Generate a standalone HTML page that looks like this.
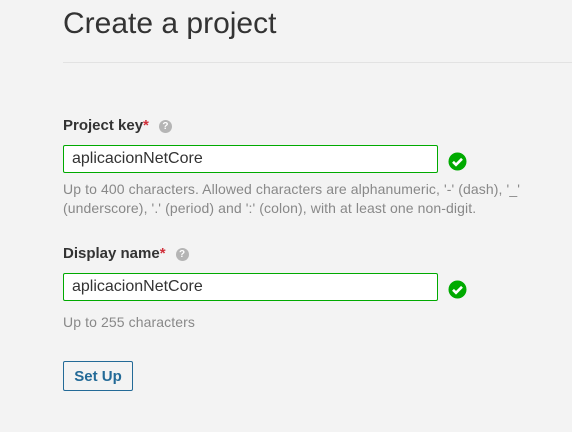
<!DOCTYPE html>
<html><head><style>
body{margin:0;background:#f3f3f3;font-family:"Liberation Sans",Arial,sans-serif;width:572px;height:432px;overflow:hidden;position:relative;color:#333}
.a{position:absolute}
h1{position:absolute;left:63px;top:7px;margin:0;font-size:30px;font-weight:normal;color:#333}
.sep{left:63px;top:62px;width:509px;height:1px;background:#e2e2e2}
.lbl{font-size:15px;font-weight:bold;color:#333}
.lbl i{color:#d02f3a;font-style:normal}
.q{display:inline-block;width:13px;height:13px;border-radius:50%;background:#b5b5b5;color:#fff;font-size:10px;line-height:13px;text-align:center;font-weight:bold;margin-left:10px;vertical-align:1px}
.inp{left:63px;height:26px;border:1px solid #00aa00;border-radius:2px;background:#fff;font-size:16px;line-height:26px;padding-left:8px;box-sizing:content-box;width:365px;color:#333}
.help{font-size:14px;color:#888;line-height:19px;letter-spacing:0.1px}
.btn{left:63px;top:361px;width:68px;height:28px;border:1px solid #236a97;border-radius:2px;color:#236a97;font-weight:bold;font-size:15px;text-align:center;line-height:29px}
</style></head><body>
<h1>Create a project</h1>
<div class="a sep"></div>
<div class="a lbl" style="left:63px;top:117px">Project key<i>*</i><span class="q">?</span></div>
<div class="a inp" style="top:145px">aplicacionNetCore</div>
<svg class="a" style="left:448px;top:152px" width="19" height="19" viewBox="0 0 19 19"><circle cx="9.5" cy="9.5" r="9" fill="#00aa00"/><path d="M5 9.8l3 3 6-6" stroke="#fff" stroke-width="2.6" fill="none"/></svg>
<div class="a help" style="left:63px;top:180px;white-space:nowrap">Up to 400 characters. Allowed characters are alphanumeric, '-' (dash), '_'<br>(underscore), '.' (period) and ':' (colon), with at least one non-digit.</div>
<div class="a lbl" style="left:63px;top:245px">Display name<i>*</i><span class="q">?</span></div>
<div class="a inp" style="top:273px">aplicacionNetCore</div>
<svg class="a" style="left:448px;top:280px" width="19" height="19" viewBox="0 0 19 19"><circle cx="9.5" cy="9.5" r="9" fill="#00aa00"/><path d="M5 9.8l3 3 6-6" stroke="#fff" stroke-width="2.6" fill="none"/></svg>
<div class="a help" style="left:63px;top:313px">Up to 255 characters</div>
<div class="a btn">Set Up</div>
</body></html>
